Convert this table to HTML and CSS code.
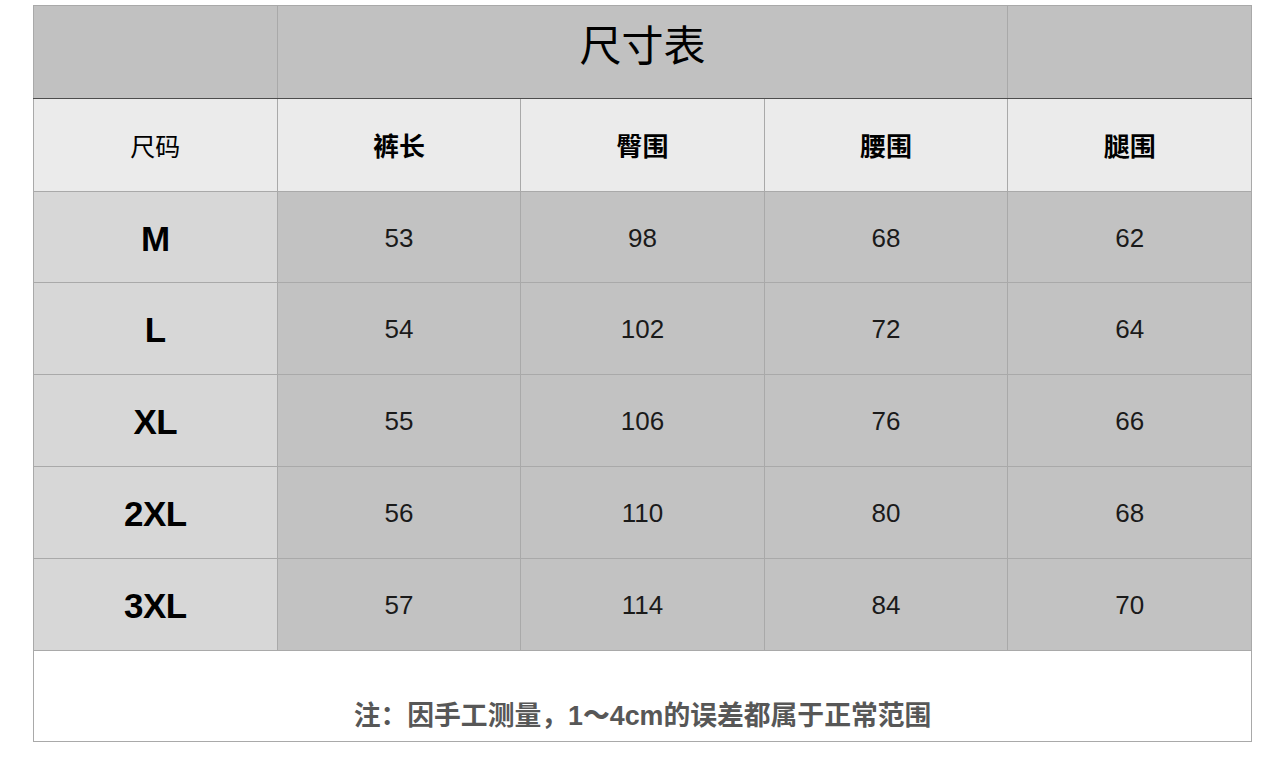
FILE: index.html
```html
<!DOCTYPE html>
<html lang="zh">
<head>
<meta charset="utf-8">
<title>尺寸表</title>
<link rel="stylesheet" href="styles.css">
</head>
<body>
<table class="size-table">
  <colgroup>
    <col class="c"><col class="c"><col class="c"><col class="c"><col class="c">
  </colgroup>
  <tr class="title-row">
    <td></td>
    <td colspan="3" class="title">尺寸表</td>
    <td></td>
  </tr>
  <tr class="head-row">
    <td class="h-size">尺码</td>
    <td>裤长</td>
    <td>臀围</td>
    <td>腰围</td>
    <td>腿围</td>
  </tr>
  <tr class="data-row first"><td class="size">M</td><td>53</td><td>98</td><td>68</td><td>62</td></tr>
  <tr class="data-row"><td class="size">L</td><td>54</td><td>102</td><td>72</td><td>64</td></tr>
  <tr class="data-row"><td class="size">XL</td><td>55</td><td>106</td><td>76</td><td>66</td></tr>
  <tr class="data-row"><td class="size">2XL</td><td>56</td><td>110</td><td>80</td><td>68</td></tr>
  <tr class="data-row"><td class="size">3XL</td><td>57</td><td>114</td><td>84</td><td>70</td></tr>
  <tr class="note-row">
    <td colspan="5" class="note">注：因手工测量，<b class="num">1～4cm</b>的误差都属于正常范围</td>
  </tr>
</table>
</body>
</html>
```

FILE: styles.css
```css
html, body {
  margin: 0;
  padding: 0;
  background: #ffffff;
}
body {
  padding: 5px 0 0 33px;
  font-family: "Liberation Sans", "Noto Sans CJK SC", sans-serif;
  color: #000;
}
.size-table {
  border-collapse: collapse;
  table-layout: fixed;
  width: 1219px;
}
.size-table td {
  border: 1px solid #a9a9a9;
  text-align: center;
  vertical-align: middle;
  padding: 0;
  line-height: 1.2;
}
.title-row {
  height: 93px;
}
.title-row td {
  background: #c1c1c1;
  border-bottom: 1px solid #4d4d4d;
}
.size-table td.title {
  font-family: "Noto Sans CJK SC", sans-serif;
  font-size: 42px;
  font-weight: 400;
  padding-bottom: 17px;
}
.head-row {
  height: 93px;
}
.head-row td {
  background: #ebebeb;
  font-family: "Noto Sans CJK SC", sans-serif;
  font-size: 26px;
  font-weight: 700;
  padding-top: 0;
}
.size-table .head-row td.h-size {
  font-weight: 400;
  font-size: 25px;
}
.data-row {
  height: 92px;
}
.data-row.first {
  height: 91px;
}
.data-row td {
  background: #c2c2c2;
  font-size: 26px;
  color: #1a1a1a;
  padding-top: 3px;
}
.data-row td.size {
  background: #d7d7d7;
  font-size: 35px;
  font-weight: 700;
  color: #000;
  letter-spacing: -0.5px;
}
.note-row {
  height: 91px;
}
.size-table td.note {
  background: #ffffff;
  vertical-align: bottom;
  padding-bottom: 9px;
  font-family: "Noto Sans CJK SC", sans-serif;
  font-size: 26.8px;
  font-weight: 700;
  color: #575757;
}
.note .num {
  font-family: "Liberation Sans", "Noto Sans CJK SC", sans-serif;
}
```
